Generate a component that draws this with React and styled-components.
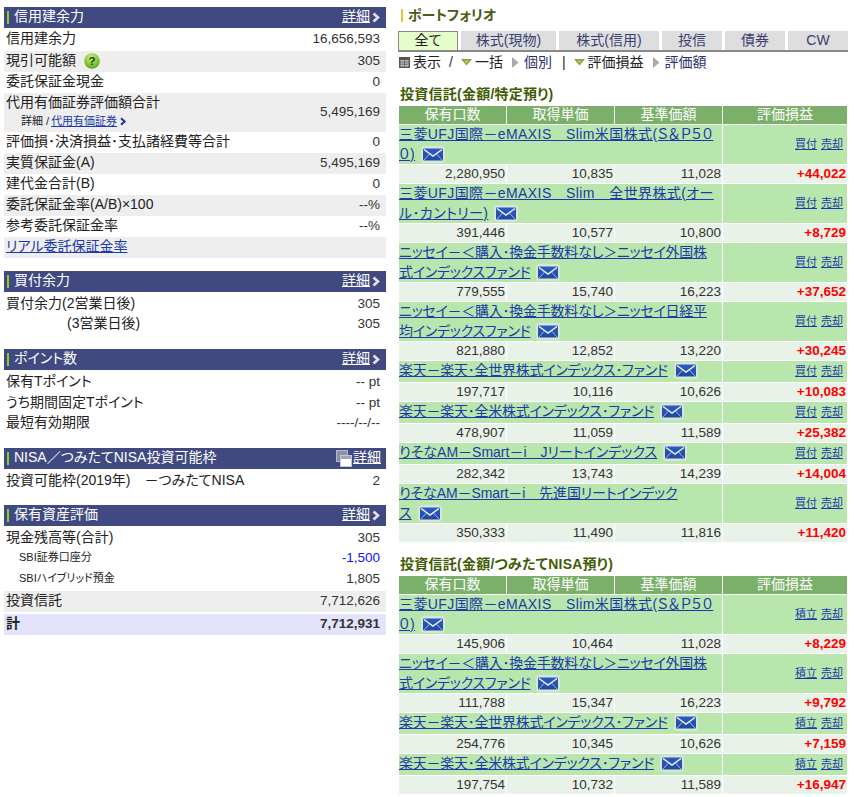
import React from "react";
import styled, { createGlobalStyle } from "styled-components";

const Global = createGlobalStyle`
  html, body { margin: 0; padding: 0; background: #fff; }
  body {
    font-family: "Liberation Sans", "Noto Sans CJK JP", sans-serif;
    font-size: 14px;
    line-height: 17px;
    color: #222;
    font-feature-settings: "palt";
  }
`;

const Page = styled.div`
  display: grid;
  grid-template-columns: 382px 449px;
  column-gap: 13px;
  padding: 7px 0 0 4px;
  width: 850px;
  box-sizing: border-box;
  align-items: start;
`;
const Column = styled.div`display: flex; flex-direction: column;`;
const Section = styled.section`margin-bottom: ${(p) => p.$after ?? 13}px;`;
const SectionBar = styled.div`
  height: 21px;
  background: #404a80;
  color: #fff;
  display: flex;
  align-items: center;
  justify-content: space-between;
  padding: 0 5px 0 3px;
`;
const BarTitle = styled.div`
  display: flex; align-items: center; gap: 5px;
  span { margin-bottom: 2px; }
  &::before { content: ""; width: 2px; height: 13px; background: #8ccb2e; }
`;
const BarLink = styled.a`
  color: #fff; display: flex; align-items: center; gap: 1px; cursor: pointer;
  span { text-decoration: underline; text-underline-offset: 1px; margin-bottom: 2px; }
`;
const Row = styled.div`
  display: flex;
  justify-content: space-between;
  align-items: center;
  box-sizing: border-box;
  height: ${(p) => p.$h ?? 21}px;
  background: ${(p) => (p.$tone === "gray" ? "#eeeeee" : p.$tone === "total" ? "#e3e3fb" : "#fff")};
  margin-top: ${(p) => p.$mt ?? 0}px;
  padding: ${(p) => p.$pt ?? 0}px 6px 0 ${(p) => p.$indent ?? 2}px;
  font-weight: ${(p) => (p.$tone === "total" ? 700 : 400)};
  white-space: nowrap;
`;
const Label = styled.div`
  display: flex; align-items: center; gap: 8px;
  font-size: ${(p) => (p.$small ? 11 : 14)}px;
  padding-bottom: 2px;
`;
const Value = styled.div`
  font-size: 13.5px; padding-bottom: 2px;
  color: ${(p) => (p.$minus ? "#1414ff" : "#333")};
`;
const TwoLine = styled.div`display: flex; flex-direction: column; line-height: 19px; padding-bottom: 2px;`;
const SubLine = styled.div`padding-left: 15px; font-size: 11px; display: flex; align-items: center; gap: 2px;`;
const Link = styled.a`color: #1c3aa9; text-decoration: underline; cursor: pointer; text-underline-offset: 1px;`;
const RowLink = styled(Link)`padding-bottom: 3px;`;

const PortfolioTitle = styled.div`
  height: 24px; display: flex; align-items: flex-start; gap: 5px; padding-left: 2px;
  font-weight: 700; font-size: 14px; color: #4a5a12;
  line-height: 16px;
  &::before { content: ""; width: 2px; height: 13px; background: #e8c52e; margin-top: 2px; }
`;
const Tabs = styled.div`
  display: flex; gap: 3px; border-bottom: 2px solid #888; height: 19px; margin-left: -1px;
`;
const Tab = styled.div`
  width: ${(p) => p.$w}px; box-sizing: border-box; text-align: center; line-height: 18px;
  background: ${(p) => (p.$active ? "#e4fdcb" : "#dedede")};
  color: ${(p) => (p.$active ? "#222" : "#3a3f70")};
  ${(p) => p.$active && "border: 1px solid #888; border-bottom: 0; line-height: 17px;"}
`;
const Toggle = styled.div`
  height: 21px; display: flex; align-items: center; white-space: nowrap; color: #222;
`;
const ToggleItem = styled.span`
  display: inline-flex; align-items: center; gap: 3px;
  margin-left: ${(p) => p.$ml ?? 0}px;
  color: ${(p) => (p.$link ? "#2c2f6e" : "#222")};
`;
const Heading = styled.div`
  font-weight: 700; font-size: 14px; color: #3f5c05; line-height: 18px; margin: ${(p) => p.$mt}px 0 3px 1px;
  letter-spacing: 0.25px;
`;
const GridRow = styled.div`
  display: grid;
  grid-template-columns: 107px 107px 107px 124px;
  column-gap: 1px;
  margin-bottom: 1px;
`;
const HeadCell = styled.div`
  background: #7bb06a; color: #fff; text-align: center; height: 18px; line-height: 17px;
`;
const NameCell = styled.div`
  grid-column: 1 / 4;
  background: #b8e6ac;
  line-height: 19.5px;
  height: ${(p) => p.$h}px;
  font-size: 14px;
  white-space: pre-line;
  overflow: hidden;
  letter-spacing: ${(p) => p.$track}px;
`;
const ActionCell = styled.div`
  background: #b8e6ac;
  display: flex; justify-content: flex-end; align-items: center; gap: 4px;
  padding-right: 4px; font-size: 11px;
`;
const NumCell = styled.div`
  background: #e9f2e8; text-align: right; height: 18px; line-height: 17px; padding-right: 1px; font-size: 13.5px; color: #333;
`;
const GainCell = styled(NumCell)`color: #ff0000; font-weight: 700;`;
const MailWrap = styled.span`
  display: inline-block; line-height: 0; vertical-align: middle;
  margin: -4px 0 -3px 6px;
`;
const SvgBox = styled.svg`flex: none; display: block;`;

const Chevron = ({ color = "#e2e2ec", size = 10 }) => (
  <SvgBox width={size} height={size + 1} viewBox="0 0 10 11">
    <path d="M2.500 1.500l4.500 4-4.500 4" fill="none" stroke={color} strokeWidth="2.600" />
  </SvgBox>
);
const WindowIcon = () => (
  <SvgBox width="16" height="17" viewBox="0 0 16 17">
    <rect x="0.500" y="0.500" width="11" height="11" fill="#8d91ab" stroke="#b4b7c8" />
    <rect x="4.500" y="5.500" width="11" height="11" fill="#fff" stroke="#c4c6d2" />
    <rect x="5" y="6" width="10" height="3" fill="#a2a4b4" />
  </SvgBox>
);
const HelpIcon = () => (
  <SvgBox width="16" height="16" viewBox="0 0 16 16">
    <defs>
      <radialGradient id="hg" cx="45%" cy="30%" r="75%">
        <stop offset="0" stopColor="#cff08c" />
        <stop offset="0.6" stopColor="#82c832" />
        <stop offset="1" stopColor="#4f9a1c" />
      </radialGradient>
    </defs>
    <circle cx="8" cy="8" r="7.800" fill="url(#hg)" />
    <text x="8" y="12" textAnchor="middle" fontSize="11.500" fontWeight="700" fontFamily="Liberation Sans" fill="#1f3a10">?</text>
  </SvgBox>
);
const Mail = () => (
  <MailWrap>
    <svg width="24" height="17" viewBox="0 0 24 17">
      <defs>
        <linearGradient id="mg" x1="0" y1="0" x2="0" y2="1">
          <stop offset="0" stopColor="#2a5cc4" />
          <stop offset="1" stopColor="#2148a0" />
        </linearGradient>
      </defs>
      <rect x="0" y="0" width="24" height="17" rx="3.500" fill="#d6e6da" />
      <rect x="2" y="2.500" width="20" height="12" rx="1" fill="url(#mg)" />
      <path d="M3 3.500l9 6.500 9-6.500" fill="none" stroke="#eaf0fb" strokeWidth="1.500" />
      <path d="M3 14l5.500-6M21 14l-5.500-6" fill="none" stroke="#9db7e6" strokeWidth="1" />
    </svg>
  </MailWrap>
);
const Tri = ({ down }) => (
  <SvgBox width="11" height="11" viewBox="0 0 11 11">
    {down ? (
      <>
        <path d="M0 2h11l-5.500 6.500z" fill="#8a9a55" />
        <path d="M3 3.500h5l-2.500 3z" fill="#b6d92c" />
      </>
    ) : (
      <path d="M2 0l6.500 5.500-6.500 5.500z" fill="#aaa" />
    )}
  </SvgBox>
);
const TableIcon = () => (
  <SvgBox width="11" height="11" viewBox="0 0 11 11">
    <rect width="11" height="11" fill="#555" />
    <path d="M1.500 3h8v6.500h-8z" fill="#c4c4c4" />
    <path d="M1.500 5h8M1.500 7.200h8M5.500 3v6.500" stroke="#666" strokeWidth="1" />
  </SvgBox>
);

const Bar = ({ title, win }) => (
  <SectionBar>
    <BarTitle><span>{title}</span></BarTitle>
    <BarLink>
      {win && <WindowIcon />}
      <span>詳細</span>
      {!win && <Chevron />}
    </BarLink>
  </SectionBar>
);
const Line = ({ label, value, ...rest }) => (
  <Row {...rest}>
    <Label $small={rest.$small}>{label}</Label>
    <Value $minus={rest.$minus}>{value}</Value>
  </Row>
);

const tokutei = [
  ["三菱UFJ国際－eMAXIS　Slim米国株式(Ｓ＆Ｐ５０\n０)", 39, 0.4, "2,280,950", "10,835", "11,028", "+44,022"],
  ["三菱UFJ国際－eMAXIS　Slim　全世界株式(オー\nル･カントリー)", 39, 0.4, "391,446", "10,577", "10,800", "+8,729"],
  ["ニッセイ－＜購入･換金手数料なし＞ニッセイ外国株\n式インデックスファンド", 39, -0.25, "779,555", "15,740", "16,223", "+37,652"],
  ["ニッセイ－＜購入･換金手数料なし＞ニッセイ日経平\n均インデックスファンド", 39, -0.25, "821,880", "12,852", "13,220", "+30,245"],
  ["楽天－楽天･全世界株式インデックス･ファンド", 21, -0.25, "197,717", "10,116", "10,626", "+10,083"],
  ["楽天－楽天･全米株式インデックス･ファンド", 21, -0.25, "478,907", "11,059", "11,589", "+25,382"],
  ["りそなAM－Smart－i　Jリートインデックス", 21, 0, "282,342", "13,743", "14,239", "+14,004"],
  ["りそなAM－Smart－i　先進国リートインデック\nス", 39, -0.1, "350,333", "11,490", "11,816", "+11,420"],
];
const tsumitate = [
  ["三菱UFJ国際－eMAXIS　Slim米国株式(Ｓ＆Ｐ５０\n０)", 39, 0.4, "145,906", "10,464", "11,028", "+8,229"],
  ["ニッセイ－＜購入･換金手数料なし＞ニッセイ外国株\n式インデックスファンド", 39, -0.25, "111,788", "15,347", "16,223", "+9,792"],
  ["楽天－楽天･全世界株式インデックス･ファンド", 21, -0.25, "254,776", "10,345", "10,626", "+7,159"],
  ["楽天－楽天･全米株式インデックス･ファンド", 21, -0.25, "197,754", "10,732", "11,589", "+16,947"],
];

const FundTable = ({ rows, buy }) => (
  <>
    <GridRow>
      {["保有口数", "取得単価", "基準価額", "評価損益"].map((h) => (
        <HeadCell key={h}>{h}</HeadCell>
      ))}
    </GridRow>
    {rows.map(([name, h, track, a, b, c, g]) => (
      <React.Fragment key={name}>
        <GridRow>
          <NameCell $h={h} $track={track}>
            <Link>{name}</Link>
            <Mail />
          </NameCell>
          <ActionCell>
            <Link>{buy}</Link>
            <Link>売却</Link>
          </ActionCell>
        </GridRow>
        <GridRow>
          <NumCell>{a}</NumCell>
          <NumCell>{b}</NumCell>
          <NumCell>{c}</NumCell>
          <GainCell>{g}</GainCell>
        </GridRow>
      </React.Fragment>
    ))}
  </>
);

export default function App() {
  return (
    <Page>
      <Global />
      <Column>
        <Section>
          <Bar title="信用建余力" />
          <Line label="信用建余力" value="16,656,593" $h={23} />
          <Line label={<>現引可能額<HelpIcon /></>} value="305" $tone="gray" />
          <Line label="委託保証金現金" value="0" />
          <Row $tone="gray" $h={39}>
            <TwoLine>
              <span>代用有価証券評価額合計</span>
              <SubLine>詳細 / <Link>代用有価証券</Link> <Chevron color="#1c3aa9" size={8} /></SubLine>
            </TwoLine>
            <Value>5,495,169</Value>
          </Row>
          <Line label="評価損･決済損益･支払諸経費等合計" value="0" />
          <Line label="実質保証金(A)" value="5,495,169" $tone="gray" />
          <Line label="建代金合計(B)" value="0" />
          <Line label="委託保証金率(A/B)×100" value="--%" $tone="gray" />
          <Line label="参考委託保証金率" value="--%" />
          <Row $tone="gray"><RowLink>リアル委託保証金率</RowLink></Row>
        </Section>
        <Section $after={14}>
          <Bar title="買付余力" />
          <Line label="買付余力(2営業日後)" value="305" $pt={4} />
          <Line label="(3営業日後)" value="305" $indent={63} $mt={1} />
        </Section>
        <Section $after={15}>
          <Bar title="ポイント数" />
          <Line label="保有Tポイント" value="-- pt" $pt={4} />
          <Line label="うち期間固定Tポイント" value="-- pt" $pt={4} />
          <Line label="最短有効期限" value="----/--/--" $pt={2} />
        </Section>
        <Section $after={15}>
          <Bar title="NISA／つみたてNISA投資可能枠" win />
          <Line label="投資可能枠(2019年)　－つみたてNISA" value="2" $pt={4} />
        </Section>
        <Section $after={0}>
          <Bar title="保有資産評価" />
          <Line label="現金残高等(合計)" value="305" $pt={4} />
          <Line label="SBI証券口座分" value="-1,500" $small $indent={15} $minus $pt={2} />
          <Line label="SBIハイブリッド預金" value="1,805" $small $indent={15} $h={23} />
          <Line label="投資信託" value="7,712,626" $tone="gray" />
          <Line label="計" value="7,712,931" $tone="total" $mt={2} />
        </Section>
      </Column>
      <Column>
        <PortfolioTitle>ポートフォリオ</PortfolioTitle>
        <Tabs>
          <Tab $w={60} $active>全て</Tab>
          <Tab $w={95}>株式(現物)</Tab>
          <Tab $w={100}>株式(信用)</Tab>
          <Tab $w={60}>投信</Tab>
          <Tab $w={60}>債券</Tab>
          <Tab $w={60}>CW</Tab>
        </Tabs>
        <Toggle>
          <ToggleItem><TableIcon />表示</ToggleItem>
          <ToggleItem $ml={8} $link>/</ToggleItem>
          <ToggleItem $ml={8}><Tri down />一括</ToggleItem>
          <ToggleItem $ml={7} $link><Tri />個別</ToggleItem>
          <ToggleItem $ml={10}>|</ToggleItem>
          <ToggleItem $ml={8}><Tri down />評価損益</ToggleItem>
          <ToggleItem $ml={7} $link><Tri />評価額</ToggleItem>
        </Toggle>
        <Heading $mt={12}>投資信託(金額/特定預り)</Heading>
        <FundTable rows={tokutei} buy="買付" />
        <Heading $mt={12}>投資信託(金額/つみたてNISA預り)</Heading>
        <FundTable rows={tsumitate} buy="積立" />
      </Column>
    </Page>
  );
}
